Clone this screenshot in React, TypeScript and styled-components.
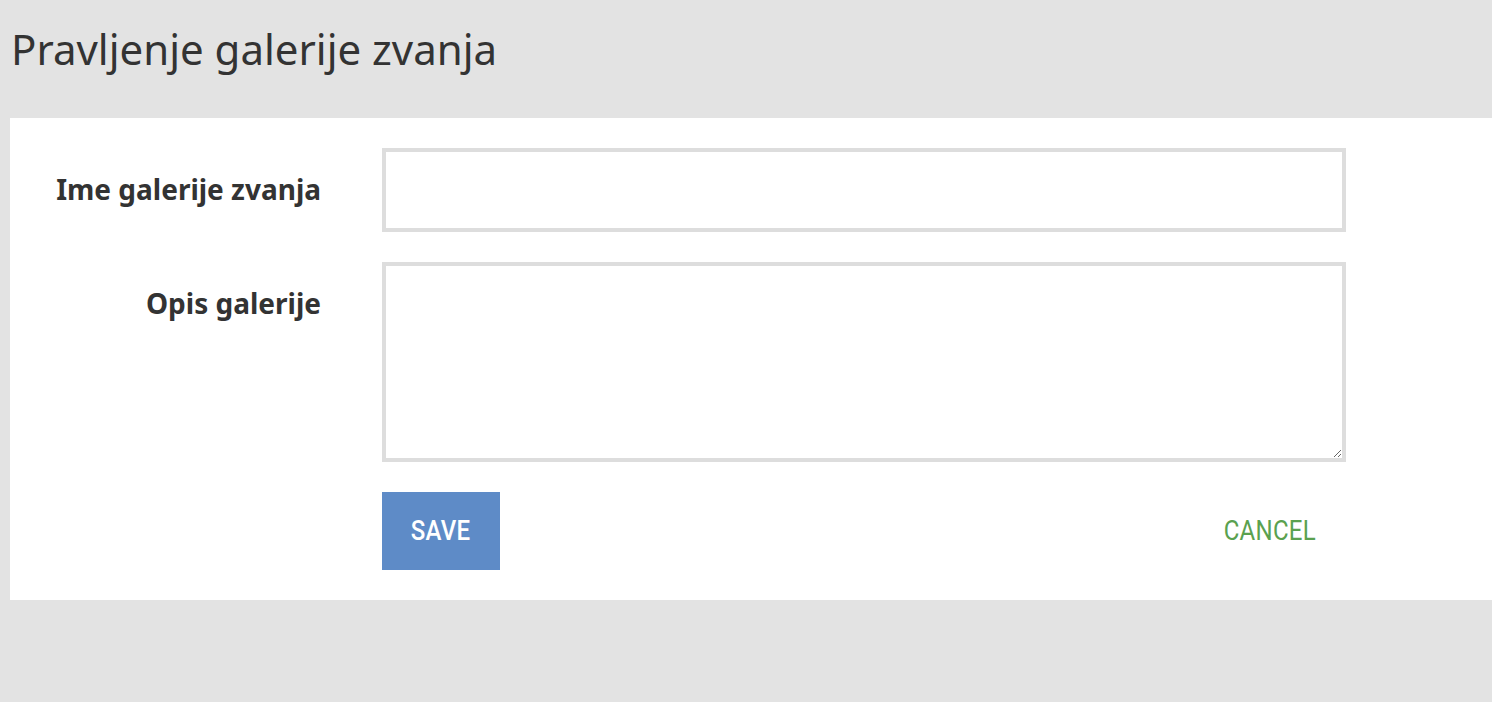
import React from "react";
import styled, { createGlobalStyle } from "styled-components";

const Global = createGlobalStyle`
  html, body { margin: 0; padding: 0; background: #e3e3e3; }
  body { font-family: "Noto Sans", "Open Sans", sans-serif; color: #333; }
  * { box-sizing: border-box; }
`;

const Page = styled.div`
  padding: 0 0 102px 10px;
  min-height: 702px;
`;

const Title = styled.h1`
  margin: 0;
  padding: 23px 0 0 1px;
  height: 118px;
  font-family: "Noto Sans", sans-serif;
  font-weight: 400;
  font-size: 42px;
  line-height: 52px;
  color: #333;
`;

const Card = styled.form`
  background: #fff;
  padding: 30px 0 30px 0;
  display: grid;
  grid-template-columns: 372px 964px 1fr;
  row-gap: 30px;
`;

const Label = styled.label<{ $top: number }>`
  grid-column: 1;
  text-align: right;
  padding-right: 61px;
  font-family: "Noto Sans", sans-serif;
  font-weight: 700;
  font-size: 28px;
  color: #333;
  line-height: 32px;
  padding-top: ${(p) => p.$top}px;
`;

const Input = styled.input`
  grid-column: 2;
  height: 84px;
  border: 4px solid #dddddd;
  background: #fff;
  outline: none;
  font-size: 20px;
  padding: 0 12px;
`;

const TextArea = styled.textarea`
  grid-column: 2;
  height: 200px;
  border: 4px solid #dddddd;
  background: #fff;
  outline: none;
  font-size: 20px;
  padding: 12px;
  resize: vertical;
`;

const Actions = styled.div`
  grid-column: 2;
  display: flex;
  justify-content: space-between;
  align-items: center;
`;

const BtnText = styled.span<{ $weight: number }>`
  display: inline-block;
  font-family: Roboto, sans-serif;
  font-size: 27px;
  font-weight: ${(p) => p.$weight};
  transform: scaleX(0.89);
  letter-spacing: 0.3px;
`;

const SaveButton = styled.button`
  width: 118px;
  height: 78px;
  border: none;
  background: #5e8bc7;
  color: #fff;
  padding: 0;
  cursor: pointer;
`;

const CancelButton = styled.button`
  width: 136px;
  height: 78px;
  margin-right: 8px;
  border: none;
  background: transparent;
  color: #5aa14f;
  padding: 0;
  cursor: pointer;
`;

export default function App() {
  return (
    <>
      <Global />
      <Page>
        <Title>Pravljenje galerije zvanja</Title>
        <Card onSubmit={(e) => e.preventDefault()}>
          <Label $top={25} htmlFor="ime">Ime galerije zvanja</Label>
          <Input id="ime" type="text" />
          <Label $top={25} htmlFor="opis">Opis galerije</Label>
          <TextArea id="opis" />
          <Actions>
            <SaveButton type="submit"><BtnText $weight={500}>SAVE</BtnText></SaveButton>
            <CancelButton type="button"><BtnText $weight={400}>CANCEL</BtnText></CancelButton>
          </Actions>
        </Card>
      </Page>
    </>
  );
}
